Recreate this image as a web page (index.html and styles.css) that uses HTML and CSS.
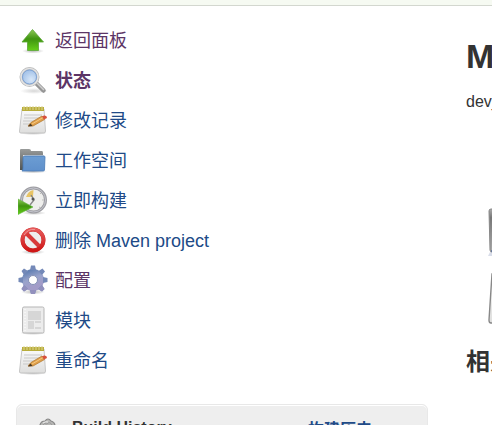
FILE: index.html
```
<!DOCTYPE html>
<html lang="zh-CN">
<head>
<meta charset="utf-8">
<title>Maven project</title>
<link rel="stylesheet" href="styles.css">
</head>
<body>
<svg class="defs" aria-hidden="true">
  <defs>
    <linearGradient id="green" x1="0" y1="0" x2="0" y2="1"><stop offset="0" stop-color="#8fc957"/><stop offset=".45" stop-color="#3f9410"/><stop offset="1" stop-color="#65cf18"/></linearGradient>
    <radialGradient id="lens" cx=".6" cy=".65"><stop offset="0" stop-color="#d8e7f8"/><stop offset="1" stop-color="#a9c6ea"/></radialGradient>
    <linearGradient id="paper" x1="0" y1="0" x2="0" y2="1"><stop offset="0" stop-color="#fbfbfa"/><stop offset="1" stop-color="#dededd"/></linearGradient>
    <linearGradient id="blue" x1="0" y1="0" x2="0" y2="1"><stop offset="0" stop-color="#6c9dd3"/><stop offset="1" stop-color="#5f90cb"/></linearGradient>
    <linearGradient id="back" x1="0" y1="0" x2="0" y2="1"><stop offset="0" stop-color="#9a9c9b"/><stop offset="1" stop-color="#4f5352"/></linearGradient>
    <linearGradient id="red" x1="0" y1="0" x2="0" y2="1"><stop offset="0" stop-color="#e65a5a"/><stop offset="1" stop-color="#cf1717"/></linearGradient>
    <linearGradient id="gear" x1="0" y1="0" x2=".4" y2="1"><stop offset="0" stop-color="#6481b4"/><stop offset=".5" stop-color="#98a3cb"/><stop offset="1" stop-color="#a29cc8"/></linearGradient>
    <radialGradient id="shade"><stop offset="0" stop-color="#777" stop-opacity=".5"/><stop offset="1" stop-color="#777" stop-opacity="0"/></radialGradient>
    <linearGradient id="metal" x1="0" y1="0" x2="0" y2="1"><stop offset="0" stop-color="#aaa"/><stop offset=".2" stop-color="#777"/><stop offset="1" stop-color="#aaa"/></linearGradient>
    <symbol id="notepad" viewBox="0 0 30 30">
      <ellipse cx="15" cy="28" rx="14" ry="2" fill="url(#shade)"/>
      <path d="M4 4H26L27.500 26Q27.500 28 26 28H3Q1 28 1.500 26Z" fill="url(#paper)" stroke="#bbb" stroke-width=".8"/>
      <path d="M4 2H26V6H4Z" fill="#b8ad3a"/>
      <path d="M6 1V5M9 1V5M12 1V5M15 1V5M18 1V5M21 1V5M24 1V5" stroke="#ddd491" stroke-width="1"/>
      <path d="M6 10H24M6 13H22M5 16H17M5 19H12" stroke="#c9c9c9"/>
      <path d="M10 21L13 17.500 24 11 26.500 14.500 15 21Z" fill="#e0a04a" stroke="#b57c35" stroke-width=".8"/>
      <path d="M14 19L25 12.500" stroke="#f5c982"/>
      <path d="M10 21.500L12.500 18.500 14.500 21Z" fill="#4a3a26"/>
      <path d="M24 11.500L26 10.500Q29 10 29 13L26 14.500Z" fill="#d8503d"/>
    </symbol>
  </defs>
</svg>
<div class="crumbs"></div>
<div class="layout">
  <aside class="side">
    <nav class="tasks">
      <a class="task visited" href="#"><svg class="icon" viewBox="0 0 30 30"><ellipse cx="15" cy="26" rx="11" ry="2.500" fill="url(#shade)"/><path d="M14.500 4.500L25.500 17H20.500V25.500H9.500V17H4Z" fill="url(#green)" stroke="#5aa636" stroke-width=".8"/></svg><span>返回面板</span></a>
      <a class="task visited current" href="#"><svg class="icon" viewBox="0 0 30 30"><ellipse cx="16" cy="26" rx="14" ry="3" fill="url(#shade)" opacity=".6"/><path d="M18 18L25.500 25.500" stroke="#969696" stroke-width="4.500" stroke-linecap="round"/><path d="M19 18L26 25" stroke="#cfcfcf" stroke-width="1.500"/><circle cx="11.500" cy="12" r="8.500" fill="url(#lens)" stroke="#b9b9b9" stroke-width="3"/><circle cx="11.500" cy="12" r="8.500" fill="none" stroke="#e3e3e3" stroke-width="1.600"/><circle cx="11.500" cy="12" r="7" fill="none" stroke="#7fa4d6"/></svg><span>状态</span></a>
      <a class="task" href="#"><svg class="icon"><use href="#notepad"/></svg><span>修改记录</span></a>
      <a class="task" href="#"><svg class="icon" viewBox="0 0 30 30"><ellipse cx="15" cy="26.500" rx="14" ry="2" fill="url(#shade)"/><path d="M2 25V5Q2 4 3 4H11Q13 4 13 6H24Q25 6 25 8V25Z" fill="url(#back)"/><path d="M5 10H26V14H5Z" fill="#ddd"/><path d="M7 11H26Q27 11 27 12L26.500 25Q26.500 26 25 26H4Q5 25 5 23V13Q5 11 7 11Z" fill="url(#blue)" stroke="#477ab6" stroke-width=".8"/></svg><span>工作空间</span></a>
      <a class="task" href="#"><svg class="icon" viewBox="0 0 30 30"><ellipse cx="16" cy="28" rx="12" ry="2" fill="url(#shade)"/><circle cx="15.500" cy="15" r="12" fill="#eeeeec" stroke="#9d9da2" stroke-width="3"/><circle cx="15.500" cy="15" r="12" fill="none" stroke="#c3c4cc" stroke-width="1"/><path d="M15 12H8Q10 6 15.500 5Z" fill="#e8c465"/><path d="M13 10L16 15 12 20" fill="none" stroke="#888" stroke-width="1.400"/><circle cx="15" cy="14" r="1.500" fill="#555"/><path d="M22 9L23 8M24 15H26M21 22L23 23" stroke="#bbb"/><path d="M0 14L15 22 0 29.500Z" fill="url(#green)" stroke="#63b842" stroke-width=".6"/></svg><span>立即构建</span></a>
      <a class="task" href="#"><svg class="icon" viewBox="0 0 30 30"><ellipse cx="15" cy="27" rx="12" ry="2.500" fill="url(#shade)"/><circle cx="15" cy="15" r="10.500" fill="#eee" stroke="#c92525" stroke-width="4"/><path d="M8 8L22 22" stroke="#d83a3a" stroke-width="4"/><circle cx="15" cy="15" r="10.500" fill="none" stroke="url(#red)" stroke-width="3.400"/><path d="M6 10Q10 3.500 17 4.500" fill="none" stroke="#f19696" stroke-width="1"/></svg><span>删除 Maven project</span></a>
      <a class="task visited" href="#"><svg class="icon" viewBox="0 0 30 30"><ellipse cx="15" cy="27" rx="12" ry="2.500" fill="url(#shade)"/><circle cx="15" cy="15" r="7.500" fill="none" stroke="url(#gear)" stroke-width="7"/><path d="M12 5L13 .5H17L18 5ZM20.500 6L24.500 3.500 27 6.500 24 10ZM25 12L29.500 13V17L25 18ZM24 20L26.500 24 24 26.500 20 24ZM18 25L17 29H13L12 25ZM10 24L6 26.500 3.500 24 6 20ZM5 18L.5 17V13L5 12ZM6 10L3.500 6 6 3.500 10 6Z" fill="#7489b8"/><path d="M24 20L26.500 24 24 26.500 20 24ZM18 25L17 29H13L12 25ZM10 24L6 26.500 3.500 24 6 20Z" fill="#9290bd"/><circle cx="15" cy="15" r="4.500" fill="#fff" stroke="#8490b5"/></svg><span>配置</span></a>
      <a class="task" href="#"><svg class="icon" viewBox="0 0 30 30"><ellipse cx="15" cy="28" rx="13" ry="2" fill="url(#shade)"/><rect x="4.500" y="2" width="21.500" height="26" rx="1.500" fill="#ececec" stroke="#b5b5b5"/><path d="M10 6H23V15H10ZM10 16H16V24H10ZM17 16H23V18H17ZM17 22H23V24H17Z" fill="#d6d6d6"/><path d="M7 4V26" stroke="#fff" stroke-dasharray="1 2"/></svg><span>模块</span></a>
      <a class="task" href="#"><svg class="icon"><use href="#notepad"/></svg><span>重命名</span></a>
    </nav>
    <section class="history">
      <svg class="cloud" viewBox="0 0 20 20"><path d="M3 14Q-1 11 3 7Q4 3 8 3Q11 -1 14 3Q18 4 18 8Q22 13 17 15Q10 19 3 14Z" fill="#b8b8b6" stroke="#888" stroke-width="1.200"/><path d="M5 8Q7 4 10 6Q13 3 15 7M4 11Q8 8 11 10M12 10Q15 8 17 11" fill="none" stroke="#999"/><path d="M6 5Q9 3 11 4" fill="none" stroke="#eee"/></svg>
      <strong class="title">Build History</strong>
      <a class="trend" href="#">构建历史</a>
    </section>
  </aside>
  <main class="main">
    <h1>Maven project</h1>
    <p class="desc">dev_</p>
    <div class="shortcuts">
      <svg class="shortcut" viewBox="0 0 60 56"><path d="M2 44H58L60 48H0Z" fill="#9faac8" opacity=".4"/><path d="M3 1H58V44H4Q2 44 2 42L1 3Q1 1 3 1Z" fill="url(#metal)" stroke="#888"/><path d="M3 43H57" stroke="#365b9d"/></svg>
      <svg class="shortcut" viewBox="0 0 60 56"><path d="M4 2H56L59 48Q59 51 57 51H3Q1 51 1 48Z" fill="url(#paper)" stroke="#888" stroke-width="1.400"/></svg>
    </div>
    <h2>相关链接</h2>
  </main>
</div>
</body>
</html>
```
FILE: styles.css
```
* {
  box-sizing: border-box;
}

body {
  margin: 0;
  height: 100vh;
  overflow: hidden;
  background: #fff;
  color: #333;
  font-family: "Liberation Sans", "Noto Sans CJK SC", sans-serif;
  font-size: 16px;
}

a {
  color: #204a87;
  text-decoration: none;
}

.defs {
  position: absolute;
  width: 0;
  height: 0;
}

.crumbs {
  height: 6px;
  background: #f6faf2;
  border-bottom: 1px solid #d3d7cf;
}

.layout {
  display: grid;
  grid-template-columns: 428px minmax(0, 1fr);
  column-gap: 38px;
}

.side {
  padding: 14px 0 0 16px;
}

.tasks {
  display: flex;
  flex-direction: column;
  padding-left: 2px;
}

.task {
  display: flex;
  align-items: center;
  gap: 7px;
  height: 40px;
  font-size: 18px;
  line-height: 24px;
}

.task span {
  padding-top: 2px;
}

.task.visited {
  color: #5c3566;
}

.current {
  font-weight: 700;
}

.icon {
  flex: none;
  width: 30px;
  height: 30px;
}

.history {
  display: grid;
  grid-template-columns: 20px 251px 1fr;
  align-items: center;
  height: 48px;
  margin-top: 24px;
  padding: 0 20px;
  background: #eee;
  border: 1px solid #e8e8e8;
  border-radius: 6px 6px 0 0;
  box-shadow: inset 0 1px #fff;
  font-weight: 700;
}

.cloud {
  width: 20px;
  height: 20px;
}

.title {
  padding-left: 15px;
}

.main {
  padding-top: 30px;
  overflow: hidden;
  white-space: nowrap;
}

h1,
h2,
.desc {
  margin: 0;
}

h1 {
  font-size: 34px;
  line-height: 40px;
}

.desc {
  margin-top: 16px;
  line-height: 20px;
}

.shortcuts {
  display: grid;
  gap: 8px;
  margin-top: 96px;
  padding-left: 22px;
}

.shortcut {
  width: 60px;
  height: 56px;
}

h2 {
  margin-top: 16px;
  font-size: 24px;
  line-height: 36px;
}
```
